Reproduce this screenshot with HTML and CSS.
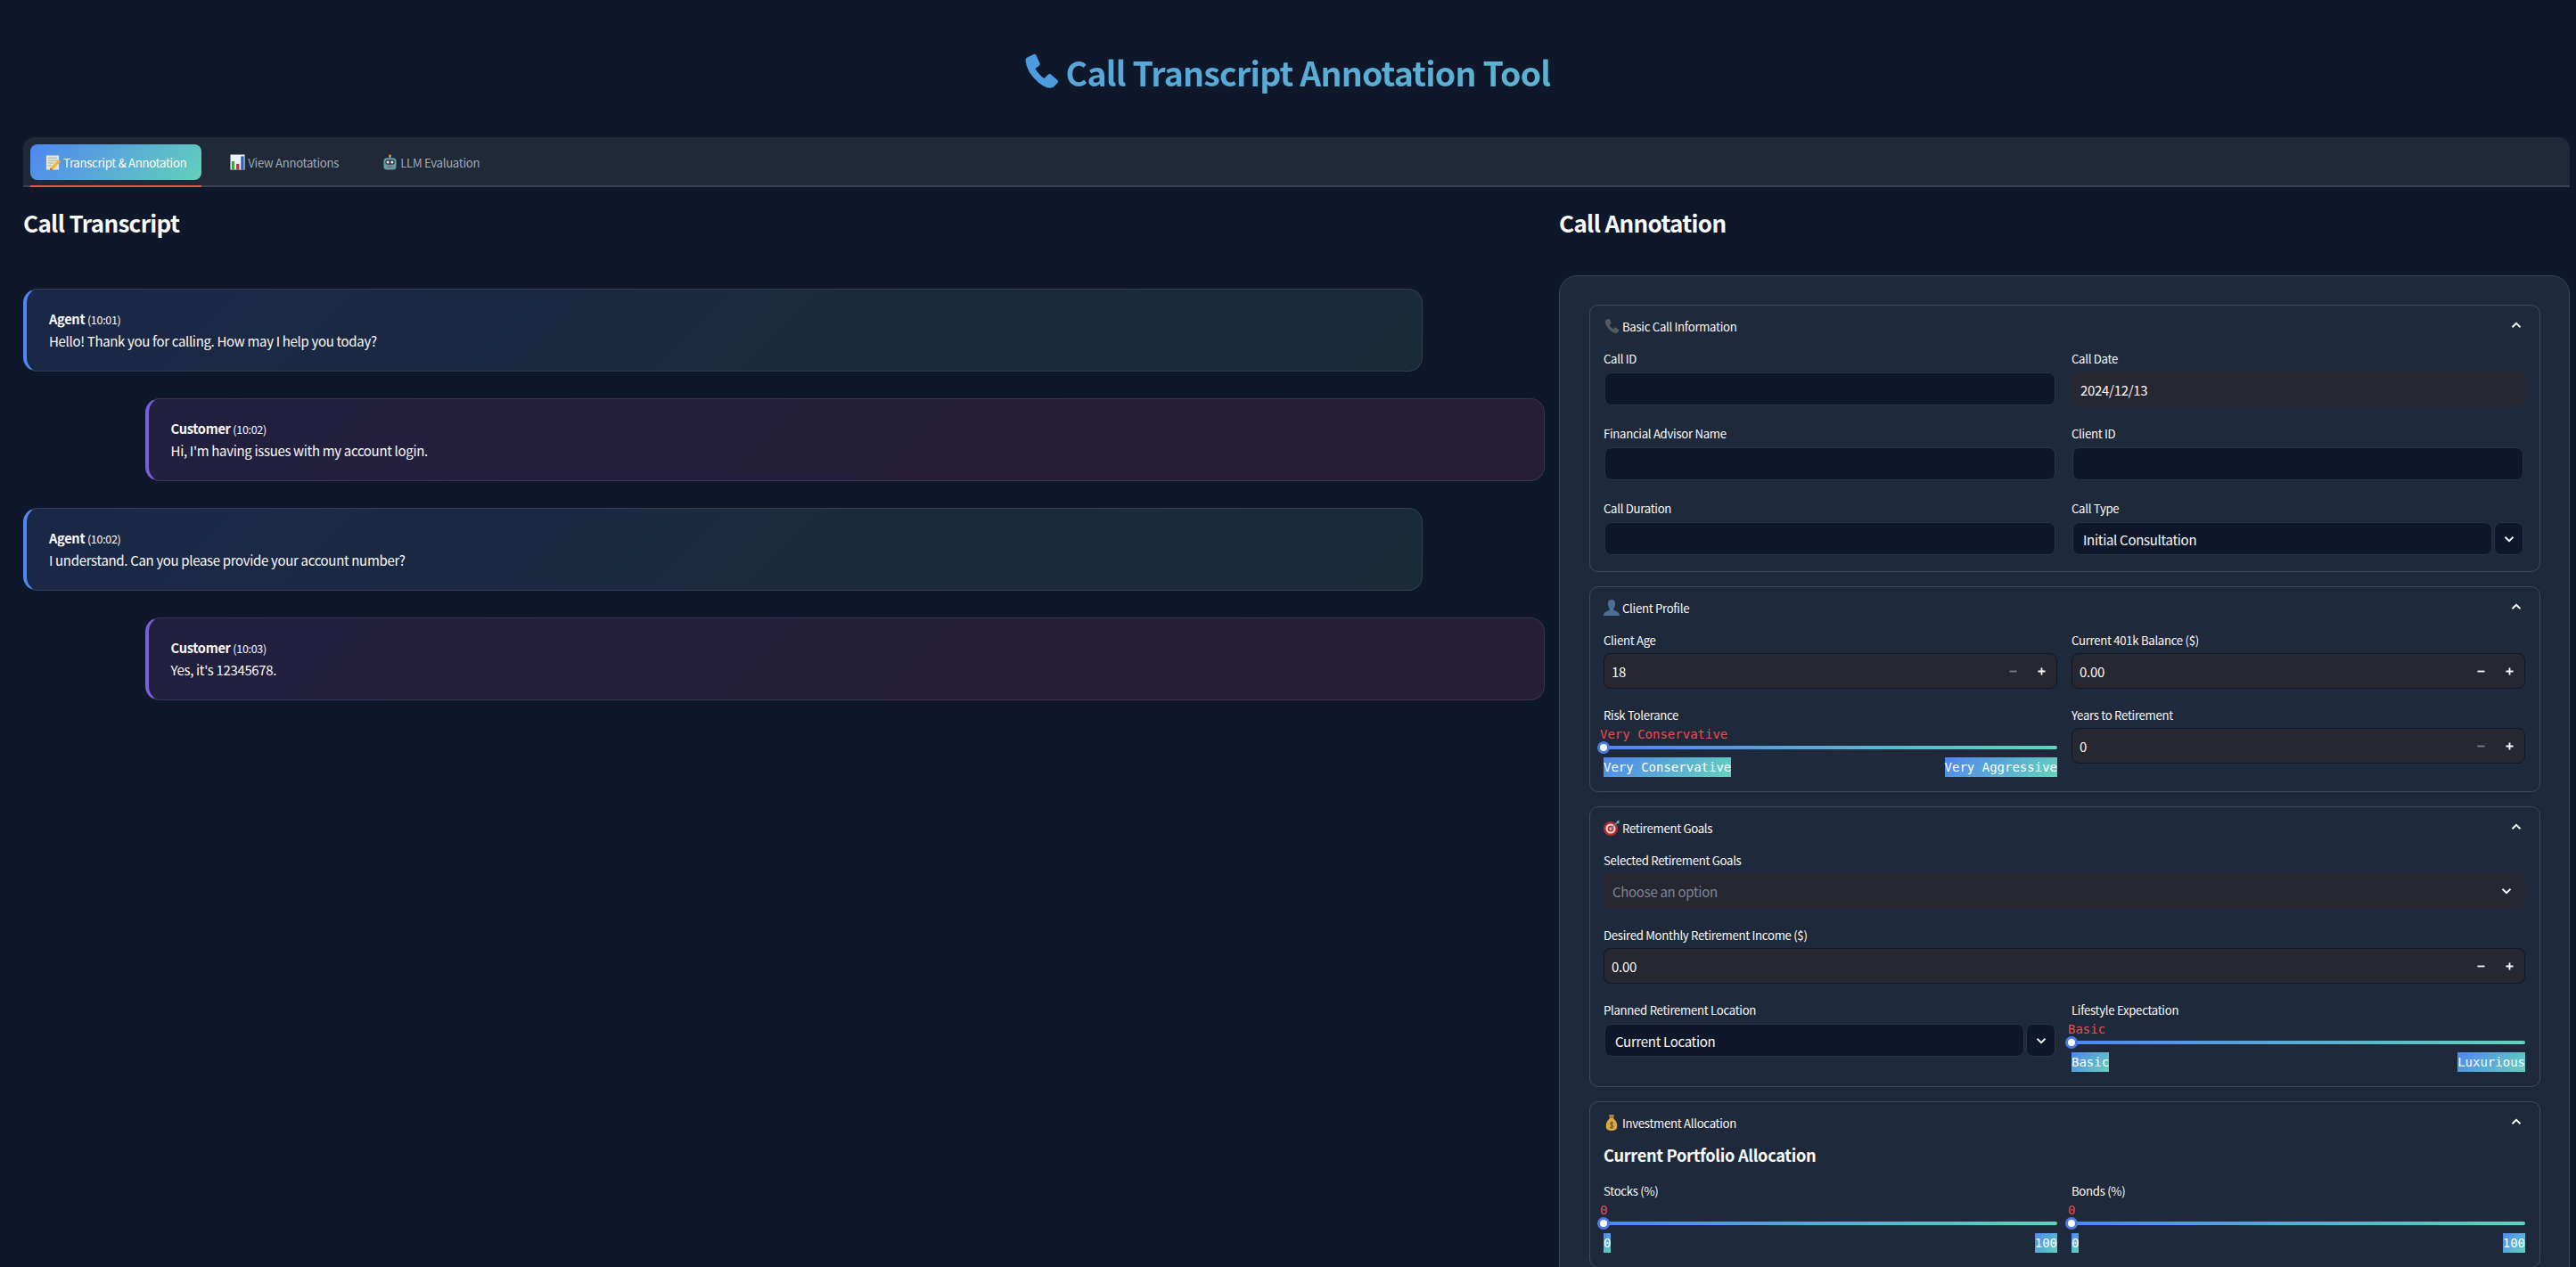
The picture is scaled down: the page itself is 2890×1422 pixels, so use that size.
FILE: index.html
```html
<!DOCTYPE html>
<html lang="en">
<head>
    <meta charset="UTF-8">
    <meta name="viewport" content="width=device-width, initial-scale=1.0">
    <title>Call Transcript Annotation Tool</title>
    <link rel="stylesheet" href="styles.css">
</head>
<body>
    <svg class="icon-defs" width="0" height="0">
        <symbol id="phone" viewBox="0 0 40 42">
            <path d="M4 6 L12 2 Q14 1 15 3 L19 12 Q20 14 18 15 L14 18 Q18 25 24 29 L28 25 Q30 23 32 25 L39 31 Q40 33 39 34 L34 39 Q28 42 18 34 Q4 22 3 9 Q3 7 4 6Z"/>
        </symbol>
        <symbol id="chev-up" viewBox="0 0 12 8">
            <path d="M1.5 6.2 L6 1.8 L10.5 6.2" fill="none" stroke="currentColor" stroke-width="1.9"/>
        </symbol>
        <symbol id="chev-down" viewBox="0 0 12 8">
            <path d="M1.5 1.8 L6 6.2 L10.5 1.8" fill="none" stroke="currentColor" stroke-width="1.9"/>
        </symbol>
        <symbol id="plus" viewBox="0 0 10 10">
            <path d="M0.5 5 H9.5 M5 0.5 V9.5" stroke="currentColor" stroke-width="2"/>
        </symbol>
        <symbol id="minus" viewBox="0 0 10 10">
            <path d="M0.5 5 H9.5" stroke="currentColor" stroke-width="2"/>
        </symbol>
    </svg>

    <div class="page">
        <h1 class="title">
            <svg class="title-phone" viewBox="0 0 40 42"><use href="#phone"/></svg>
            <span class="title-text">Call Transcript Annotation Tool</span>
        </h1>

        <div class="tabs">
            <div class="tab active">
                <svg class="tab-icon" viewBox="0 0 18 18">
                    <rect x="1" y="1" width="15" height="17" fill="#e8e6dc"/>
                    <path d="M3 4 H14 M3 7 H14 M3 10 H10 M3 13 H7" stroke="#a9a99f" stroke-width="1"/>
                    <path d="M6 16 L15 6 L18 8.500 L8.500 18 L5.500 18Z" fill="#f2b632"/>
                    <path d="M5.500 18 L6 16 L8.500 18Z" fill="#5a4632"/>
                </svg>
                Transcript &amp; Annotation
            </div>
            <div class="tab">
                <svg class="tab-icon" viewBox="0 0 18 18">
                    <rect x="0.500" y="0" width="17" height="18" fill="#eef0f2"/>
                    <rect x="2" y="8" width="3.500" height="10" fill="#3fa34d"/>
                    <rect x="7.500" y="11" width="3.500" height="7" fill="#c62f2a"/>
                    <rect x="13" y="2" width="3.500" height="16" fill="#2f5fb5"/>
                </svg>
                View Annotations
            </div>
            <div class="tab">
                <svg class="tab-icon" viewBox="0 0 18 18">
                    <circle cx="9" cy="1.500" r="1.500" fill="#e8a33d"/>
                    <rect x="8" y="2" width="2" height="3" fill="#8a99a0"/>
                    <rect x="1.500" y="4" width="15" height="14" rx="4" fill="#5f9ea6"/>
                    <rect x="3.500" y="6" width="11" height="6" rx="3" fill="#2c3a48"/>
                    <circle cx="6.500" cy="9" r="1.600" fill="#e8eef0"/>
                    <circle cx="11.500" cy="9" r="1.600" fill="#e8eef0"/>
                    <path d="M6 14.500 H12" stroke="#c64a4a" stroke-width="1.600"/>
                </svg>
                LLM Evaluation
            </div>
        </div>

        <div class="columns">
            <section class="transcript">
                <h2 class="section-title">Call Transcript</h2>
                <div class="messages">
                    <div class="msg agent">
                        <div class="speaker"><b>Agent</b> <small>(10:01)</small></div>
                        <div class="line">Hello! Thank you for calling. How may I help you today?</div>
                    </div>
                    <div class="msg customer">
                        <div class="speaker"><b>Customer</b> <small>(10:02)</small></div>
                        <div class="line">Hi, I'm having issues with my account login.</div>
                    </div>
                    <div class="msg agent">
                        <div class="speaker"><b>Agent</b> <small>(10:02)</small></div>
                        <div class="line">I understand. Can you please provide your account number?</div>
                    </div>
                    <div class="msg customer">
                        <div class="speaker"><b>Customer</b> <small>(10:03)</small></div>
                        <div class="line">Yes, it's 12345678.</div>
                    </div>
                </div>
            </section>

            <section class="annotation">
                <h2 class="section-title">Call Annotation</h2>
                <div class="panel">

                    <div class="expander">
                        <div class="exp-head">
                            <svg class="exp-icon phone-small" viewBox="0 0 40 42"><use href="#phone"/></svg>
                            <span>Basic Call Information</span>
                            <svg class="chev-up"><use href="#chev-up"/></svg>
                        </div>
                        <div class="grid">
                            <div class="field">
                                <label class="field-label">Call ID</label>
                                <input class="text-input" type="text">
                            </div>
                            <div class="field">
                                <label class="field-label">Call Date</label>
                                <div class="date-input">2024/12/13</div>
                            </div>
                            <div class="field">
                                <label class="field-label">Financial Advisor Name</label>
                                <input class="text-input" type="text">
                            </div>
                            <div class="field">
                                <label class="field-label">Client ID</label>
                                <input class="text-input" type="text">
                            </div>
                            <div class="field">
                                <label class="field-label">Call Duration</label>
                                <input class="text-input" type="text">
                            </div>
                            <div class="field">
                                <label class="field-label">Call Type</label>
                                <div class="select">
                                    <div class="select-value">Initial Consultation</div>
                                    <div class="select-btn"><svg class="chev-down"><use href="#chev-down"/></svg></div>
                                </div>
                            </div>
                        </div>
                    </div>

                    <div class="expander">
                        <div class="exp-head">
                            <svg class="exp-icon" viewBox="0 0 18 18">
                                <path d="M9 0 C12.500 0 13.500 3 13 6 C12.700 8 11.500 10 11 11 C12 13 18 13 18 18 H0 C0 13 6 13 7 11 C6.500 10 5.300 8 5 6 C4.500 3 5.500 0 9 0Z" fill="#4d6f96"/>
                            </svg>
                            <span>Client Profile</span>
                            <svg class="chev-up"><use href="#chev-up"/></svg>
                        </div>
                        <div class="grid">
                            <div class="field">
                                <label class="field-label">Client Age</label>
                                <div class="number-input">
                                    <span class="number-value">18</span>
                                    <svg class="step off"><use href="#minus"/></svg>
                                    <svg class="step"><use href="#plus"/></svg>
                                </div>
                            </div>
                            <div class="field">
                                <label class="field-label">Current 401k Balance ($)</label>
                                <div class="number-input">
                                    <span class="number-value">0.00</span>
                                    <svg class="step"><use href="#minus"/></svg>
                                    <svg class="step"><use href="#plus"/></svg>
                                </div>
                            </div>
                            <div class="field">
                                <label class="field-label">Risk Tolerance</label>
                                <div class="slider">
                                    <div class="slider-value">Very Conservative</div>
                                    <div class="track"><span class="thumb"></span></div>
                                    <div class="ticks"><span>Very Conservative</span><span>Very Aggressive</span></div>
                                </div>
                            </div>
                            <div class="field">
                                <label class="field-label">Years to Retirement</label>
                                <div class="number-input">
                                    <span class="number-value">0</span>
                                    <svg class="step off"><use href="#minus"/></svg>
                                    <svg class="step"><use href="#plus"/></svg>
                                </div>
                            </div>
                        </div>
                    </div>

                    <div class="expander">
                        <div class="exp-head">
                            <svg class="exp-icon" viewBox="0 0 18 18">
                                <circle cx="8" cy="10" r="8" fill="#b52a2a"/>
                                <circle cx="8" cy="10" r="5.500" fill="#e8e4de"/>
                                <circle cx="8" cy="10" r="3.500" fill="#c23030"/>
                                <circle cx="8" cy="10" r="1.500" fill="#e8e4de"/>
                                <path d="M8 10 L16 2.500" stroke="#5f8f9a" stroke-width="1.600"/>
                                <path d="M14.500 2 L17.500 0.500 L17.500 4 L15.500 4.500Z" fill="#5fc0c0"/>
                            </svg>
                            <span>Retirement Goals</span>
                            <svg class="chev-up"><use href="#chev-up"/></svg>
                        </div>
                        <div class="grid">
                            <div class="field wide">
                                <label class="field-label">Selected Retirement Goals</label>
                                <div class="multi">
                                    <span class="placeholder">Choose an option</span>
                                    <svg class="chev-down"><use href="#chev-down"/></svg>
                                </div>
                            </div>
                            <div class="field wide">
                                <label class="field-label">Desired Monthly Retirement Income ($)</label>
                                <div class="number-input">
                                    <span class="number-value">0.00</span>
                                    <svg class="step"><use href="#minus"/></svg>
                                    <svg class="step"><use href="#plus"/></svg>
                                </div>
                            </div>
                            <div class="field">
                                <label class="field-label">Planned Retirement Location</label>
                                <div class="select">
                                    <div class="select-value">Current Location</div>
                                    <div class="select-btn"><svg class="chev-down"><use href="#chev-down"/></svg></div>
                                </div>
                            </div>
                            <div class="field">
                                <label class="field-label">Lifestyle Expectation</label>
                                <div class="slider">
                                    <div class="slider-value">Basic</div>
                                    <div class="track"><span class="thumb"></span></div>
                                    <div class="ticks"><span>Basic</span><span>Luxurious</span></div>
                                </div>
                            </div>
                        </div>
                    </div>

                    <div class="expander">
                        <div class="exp-head">
                            <svg class="exp-icon" viewBox="0 0 18 18">
                                <path d="M6 0 H12 L11 4 H7Z" fill="#a8813a"/>
                                <path d="M7 4 H11 C14 7 16 10 15 15 C14.500 17 12 18 9 18 C6 18 3.500 17 3 15 C2 10 4 7 7 4Z" fill="#d9a93f"/>
                                <path d="M11 9.500 C10 8.500 7.500 8.800 7.500 10.300 C7.500 12 11 11.500 11 13.300 C11 14.800 8.300 15 7 14 M9.200 7.500 V16" fill="none" stroke="#5f4a20" stroke-width="1"/>
                            </svg>
                            <span>Investment Allocation</span>
                            <svg class="chev-up"><use href="#chev-up"/></svg>
                        </div>
                        <h3 class="sub-title">Current Portfolio Allocation</h3>
                        <div class="grid">
                            <div class="field">
                                <label class="field-label">Stocks (%)</label>
                                <div class="slider">
                                    <div class="slider-value">0</div>
                                    <div class="track"><span class="thumb"></span></div>
                                    <div class="ticks"><span>0</span><span>100</span></div>
                                </div>
                            </div>
                            <div class="field">
                                <label class="field-label">Bonds (%)</label>
                                <div class="slider">
                                    <div class="slider-value">0</div>
                                    <div class="track"><span class="thumb"></span></div>
                                    <div class="ticks"><span>0</span><span>100</span></div>
                                </div>
                            </div>
                        </div>
                    </div>

                </div>
            </section>
        </div>
    </div>
</body>
</html>
```

FILE: styles.css
```css
html, body {
    margin: 0;
    height: 100%;
    overflow: hidden;
}
body {
    background: #0f172a;
    color: #fafafa;
    font-family: "Noto Sans CJK SC", "Noto Sans", sans-serif;
    font-size: 13.2px;
    letter-spacing: -0.3px;
}
.icon-defs {
    position: absolute;
}
.page {
    padding: 0 7px 0 26px;
}

/* header */
.title {
    height: 154px;
    margin: 0 -3px 0 -26px;
    padding-top: 7px;
    box-sizing: border-box;
    display: flex;
    align-items: center;
    justify-content: center;
    gap: 8px;
    font-size: 37.5px;
    letter-spacing: -0.8px;
    font-weight: 700;
    line-height: 52px;
    background: linear-gradient(135deg, #4f86f0, #63d2bb);
    -webkit-background-clip: text;
    background-clip: text;
    color: transparent;
}
.title-phone {
    width: 41px;
    height: 42px;
    margin-bottom: 2px;
    fill: #4b9de0;
}

/* tabs */
.tabs {
    height: 56px;
    box-sizing: border-box;
    background: #1f2937;
    border-radius: 12px 12px 0 0;
    border-bottom: 2px solid #3b4252;
    padding: 8px 8px 0;
    display: flex;
    gap: 15px;
}
.tab {
    height: 40px;
    padding: 0 17px;
    display: flex;
    align-items: center;
    gap: 3px;
    color: #a3a8b4;
    position: relative;
    border-radius: 8px;
}
.tab-icon {
    width: 17px;
    height: 18px;
}
.tab.active {
    color: #fff;
    background: linear-gradient(135deg, #4f86f0, #63d2bb);
}
.tab.active::after {
    content: "";
    position: absolute;
    left: 0;
    right: 0;
    top: 46px;
    height: 2px;
    background: #ef5350;
}

/* columns */
.columns {
    display: grid;
    grid-template-columns: 1707px 1134px;
    gap: 16px;
}
.section-title {
    margin: 20px 0 0;
    height: 79px;
    font-size: 26px;
    letter-spacing: -0.65px;
    line-height: 40px;
    font-weight: 700;
}

/* transcript */
.messages {
    padding-top: 15px;
    display: flex;
    flex-direction: column;
    gap: 30px;
}
.msg {
    width: 92%;
    height: 93px;
    box-sizing: border-box;
    padding: 21px 24px 0 25px;
    border: 1px solid rgba(255, 255, 255, 0.1);
    border-radius: 16px;
    line-height: 24px;
}
.agent {
    background: linear-gradient(135deg, #1a2847, #192b37);
    border-left: 4px solid #4f86f0;
}
.customer {
    margin-left: auto;
    background: linear-gradient(135deg, #221f3f, #261e36);
    border-left: 4px solid #7c5fe0;
}
.speaker b {
    font-size: 14.6px;
}
.speaker small {
    font-size: 12.5px;
}
.line {
    font-size: 15px;
    letter-spacing: -0.33px;
}

/* annotation form */
.panel {
    box-sizing: border-box;
    height: 1200px;
    padding: 32px 32px 0 33px;
    background: #1e293b;
    border: 1px solid #3b4658;
    border-radius: 20px;
}
.expander {
    border: 1px solid #3f4a5c;
    border-radius: 10px;
    padding: 0 16px 16px 15px;
    margin-bottom: 16px;
}
.exp-head {
    height: 46px;
    margin-bottom: 4px;
    display: flex;
    align-items: center;
    gap: 3px;
}
.exp-head span {
    flex: 1;
}
.exp-icon {
    width: 18px;
    height: 18px;
}
.phone-small {
    fill: #555b63;
}
.chev-up {
    width: 12px;
    height: 8px;
    margin-right: 4px;
    margin-top: -2px;
}
.chev-down {
    width: 12px;
    height: 8px;
}
.grid {
    display: grid;
    grid-template-columns: 1fr 1fr;
    gap: 20px 16px;
}
.wide {
    grid-column: 1 / 3;
}
.field-label {
    display: block;
    height: 24px;
    line-height: 19px;
}
.text-input {
    display: block;
    box-sizing: border-box;
    width: calc(100% - 3px);
    height: 37px;
    margin: 1px 2px 2px 1px;
    background: #0f172a;
    border: 1px solid #2a3344;
    border-radius: 8px;
    outline: none;
}
.date-input,
.multi {
    height: 40px;
    box-sizing: border-box;
    background: #262730;
    border-radius: 8px;
    display: flex;
    align-items: center;
    padding: 0 10px;
    font-size: 15px;
}
.multi {
    justify-content: space-between;
    padding-right: 15px;
}
.placeholder {
    color: #808495;
}
.select {
    height: 37px;
    margin: 1px 2px 2px 1px;
    display: flex;
    gap: 2px;
    font-size: 15px;
}
.select-value {
    flex: 1;
    background: #0f172a;
    border: 1px solid #2a3344;
    border-radius: 8px;
    box-sizing: border-box;
    display: flex;
    align-items: center;
    padding: 2px 0 0 11px;
}
.select-btn {
    width: 33px;
    background: #0f172a;
    border: 1px solid #2a3344;
    border-radius: 8px;
    box-sizing: border-box;
    display: flex;
    align-items: center;
    justify-content: center;
}
.number-input {
    height: 40px;
    box-sizing: border-box;
    background: #262730;
    border: 1px solid #0f172a;
    border-radius: 8px;
    display: flex;
    align-items: center;
    padding: 0 12px 0 8px;
    gap: 23px;
    font-size: 15px;
}
.number-value {
    flex: 1;
}
.step {
    width: 9px;
    height: 9px;
}
.step.off {
    color: #7a7e8c;
}

/* sliders */
.slider-value {
    height: 14px;
    margin-left: -4px;
    font-family: "DejaVu Sans Mono", monospace;
    font-size: 14px;
    letter-spacing: 0;
    line-height: 14px;
    color: #e84e4e;
}
.track {
    position: relative;
    height: 4px;
    margin: 6px 0 9px;
    border-radius: 2px;
    background: linear-gradient(90deg, #4f86f0, #63d2bb);
}
.thumb {
    position: absolute;
    left: -7px;
    top: -5px;
    width: 14px;
    height: 14px;
    box-sizing: border-box;
    background: #fff;
    border: 3px solid #4a78e6;
    border-radius: 50%;
}
.ticks {
    display: flex;
    justify-content: space-between;
    font-family: "DejaVu Sans Mono", monospace;
    font-size: 14px;
    letter-spacing: 0;
    line-height: 22px;
    color: #fff;
}
.ticks span {
    background: linear-gradient(135deg, #4f86f0, #63d2bb);
}
.sub-title {
    height: 40px;
    margin: 0;
    font-size: 18.2px;
    letter-spacing: -0.3px;
    line-height: 18px;
    font-weight: 700;
}
```
